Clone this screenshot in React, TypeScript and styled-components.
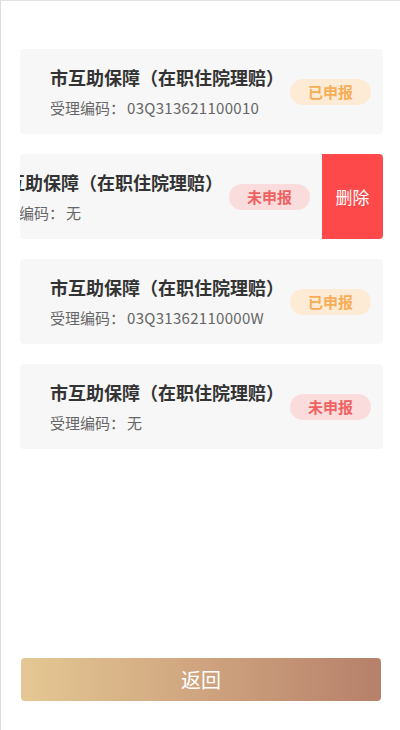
import React from 'react';
import styled, { createGlobalStyle } from 'styled-components';

const GlobalStyle = createGlobalStyle`
  html, body {
    margin: 0;
    padding: 0;
    background: #fff;
    font-family: "Noto Sans CJK SC", "Noto Sans", sans-serif;
  }
`;

const Page = styled.div`
  box-sizing: border-box;
  height: 730px;
  display: flex;
  flex-direction: column;
  border-left: 1px solid #dcdcdc;
  border-top: 1px solid #e2e2e2;
`;

const List = styled.div`
  display: flex;
  flex-direction: column;
  gap: 20px;
  padding: 48px 17px 0 19px;
`;

const SwipeCell = styled.div`
  height: 85px;
  border-radius: 4px;
  overflow: hidden;
  display: flex;
`;

const Track = styled.div<{ $offset: number }>`
  display: flex;
  flex: 0 0 auto;
  transform: translateX(-${p => p.$offset}px);
`;

const Card = styled.div`
  box-sizing: border-box;
  flex: 0 0 363px;
  height: 85px;
  background: #f7f7f7;
  display: flex;
  align-items: center;
  padding: 0 12px 0 30px;
`;

const Info = styled.div`
  flex: 1;
  display: flex;
  flex-direction: column;
  gap: 9px;
`;

const Title = styled.div`
  font-size: 18px;
  font-weight: 700;
  color: #333;
  line-height: 24px;
  white-space: nowrap;
`;

const Code = styled.div`
  font-size: 15px;
  color: #666;
  line-height: 20px;
  white-space: nowrap;

  span {
    margin-left: 2px;
    letter-spacing: 0.3px;
  }
`;

const Badge = styled.div<{ $done: boolean }>`
  width: 81px;
  height: 26px;
  border-radius: 13px;
  display: flex;
  align-items: center;
  justify-content: center;
  font-size: 15px;
  font-weight: 700;
  background: ${p => (p.$done ? '#fdebd6' : '#fbdcdc')};
  color: ${p => (p.$done ? '#f6ad55' : '#ef6161')};
`;

const DeleteButton = styled.button`
  flex: 0 0 61px;
  height: 85px;
  border: none;
  margin: 0;
  padding: 0;
  background: #fd4949;
  color: #fff;
  font-family: inherit;
  font-size: 17px;
`;

const Footer = styled.div`
  margin-top: auto;
  padding: 0 19px 29px 20px;
`;

const BackButton = styled.button`
  width: 100%;
  height: 43px;
  border: none;
  border-radius: 4px;
  background: linear-gradient(90deg, #e4c893 0%, #cfa47f 50%, #b6806a 100%);
  color: #fff;
  font-family: inherit;
  font-size: 20px;
`;

const records = [
  { code: '03Q313621100010', done: true, swiped: false },
  { code: '无', done: false, swiped: true },
  { code: '03Q31362110000W', done: true, swiped: false },
  { code: '无', done: false, swiped: false },
];

export default function App() {
  return (
    <>
      <GlobalStyle />
      <Page>
        <List>
          {records.map((r, i) => (
            <SwipeCell key={i}>
              <Track $offset={r.swiped ? 61 : 0}>
                <Card>
                  <Info>
                    <Title>市互助保障（在职住院理赔）</Title>
                    <Code>
                      受理编码：<span>{r.code}</span>
                    </Code>
                  </Info>
                  <Badge $done={r.done}>{r.done ? '已申报' : '未申报'}</Badge>
                </Card>
                {r.swiped && <DeleteButton>删除</DeleteButton>}
              </Track>
            </SwipeCell>
          ))}
        </List>
        <Footer>
          <BackButton>返回</BackButton>
        </Footer>
      </Page>
    </>
  );
}
